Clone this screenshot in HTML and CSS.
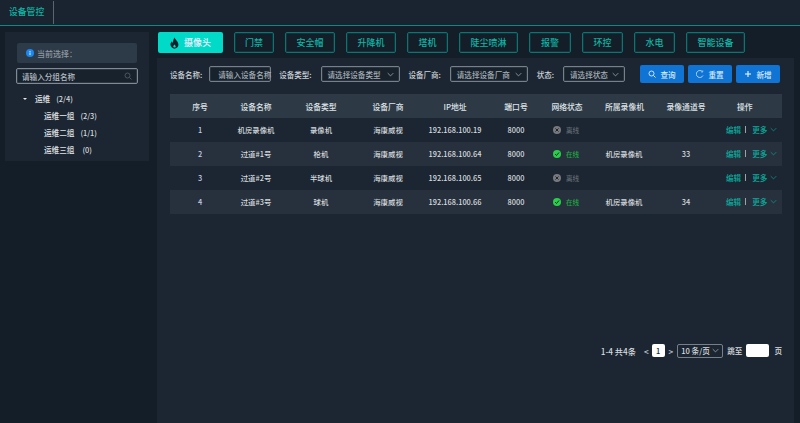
FILE: index.html
```html
<!DOCTYPE html>
<html lang="zh">
<head>
<meta charset="utf-8">
<title>设备管控</title>
<link rel="stylesheet" href="styles.css">
</head>
<body>
<header class="topbar"><div class="brand">设备管控</div></header>
<div class="content">
  <aside class="sidebar">
    <div class="current"><svg class="info" viewBox="0 0 16 16"><circle cx="8" cy="8" r="8" fill="#1d86f0"/><rect x="7" y="7" width="2" height="5" fill="#dff"/><rect x="7" y="4" width="2" height="2" fill="#dff"/></svg><span>当前选择：</span></div>
    <div class="search"><span>请输入分组名称</span><svg class="search-ic" viewBox="0 0 16 16" fill="none" stroke="#56616c" stroke-width="1.6"><circle cx="7" cy="7" r="5"/><path d="M11 11l4 4"/></svg></div>
    <ul class="tree">
      <li class="tree-root"><i class="caret"></i><b>运维</b><span>(2/4)</span></li>
      <li><b>运维一组</b><span>(2/3)</span></li>
      <li><b>运维二组</b><span>(1/1)</span></li>
      <li><b>运维三组</b><span class="zero">(0)</span></li>
    </ul>
  </aside>
  <main class="main">
    <nav class="tabs">
      <a class="tab active"><svg class="flame" viewBox="0 0 16 20"><path fill-rule="evenodd" d="M8.5 0c.5 3 2.500 4.500 4.500 7.500 1.500 2.300 2.300 4.500 1.800 7-.7 3.300-3.500 5.500-6.800 5.500-3.500 0-6.500-2.300-7-5.800C.2 11.500 1.500 9 3.500 7c0 1.500.5 2.600 1.600 3.200C4.800 6.500 6 3 8.500 0zM8 12.500c-1 1.200-2.200 2.200-2.200 3.700 0 1.200 1 2 2.200 2s2.200-.8 2.200-2c0-1.500-1.200-2.500-2.200-3.700z" fill="#142029"/></svg>摄像头</a>
      <a class="tab w39">门禁</a>
      <a class="tab w50">安全帽</a>
      <a class="tab w50">升降机</a>
      <a class="tab w40">塔机</a>
      <a class="tab w60">陡尘喷淋</a>
      <a class="tab w42">报警</a>
      <a class="tab w40">环控</a>
      <a class="tab w40">水电</a>
      <a class="tab w60">智能设备</a>
    </nav>
    <section class="panel">
      <div class="filters">
        <label class="lbl">设备名称:</label>
        <div class="field f-name">请输入设备名称</div>
        <label class="lbl l2">设备类型:</label>
        <div class="field f-type">请选择设备类型<svg class="chev" viewBox="0 0 10 6"><path d="M1 1l4 4 4-4"/></svg></div>
        <label class="lbl l3">设备厂商:</label>
        <div class="field f-vendor">请选择设备厂商<svg class="chev" viewBox="0 0 10 6"><path d="M1 1l4 4 4-4"/></svg></div>
        <label class="lbl l4">状态:</label>
        <div class="field f-state">请选择状态<svg class="chev" viewBox="0 0 10 6"><path d="M1 1l4 4 4-4"/></svg></div>
        <button class="btn first"><svg viewBox="0 0 16 16" fill="none" stroke="#dbeeff" stroke-width="1.8"><circle cx="7" cy="7" r="5"/><path d="M11 11l4 4"/></svg>查询</button>
        <button class="btn"><svg viewBox="0 0 16 16" fill="none" stroke="#dbeeff" stroke-width="1.5"><path d="M13 3.500A7 7 0 1 0 14 11"/><path d="M13.500 .5v3.500h-3.500" stroke-width="1"/></svg>重置</button>
        <button class="btn"><svg viewBox="0 0 16 16" fill="none" stroke="#fff" stroke-width="2"><path d="M8 2v12M2 8h12"/></svg>新增</button>
      </div>
      <table class="grid">
        <colgroup><col class="c1"><col class="c2"><col class="c3"><col class="c4"><col class="c5"><col class="c6"><col class="c7"><col class="c8"><col class="c9"><col class="c10"></colgroup>
        <thead><tr><th>序号</th><th>设备名称</th><th>设备类型</th><th>设备厂商</th><th>IP地址</th><th>端口号</th><th class="nh">网络状态</th><th>所属录像机</th><th class="ch">录像通道号</th><th class="oph">操作</th></tr></thead>
        <tbody>
          <tr><td class="num">1</td><td>机房录像机</td><td>录像机</td><td>海康威视</td><td>192.168.100.19</td><td>8000</td><td><span class="st off"><svg viewBox="0 0 16 16"><circle cx="8" cy="8" r="8" fill="#77797c"/><path d="M5 5l6 6M11 5l-6 6" stroke="#20262c" stroke-width="2"/></svg>离线</span></td><td></td><td class="ch"></td><td><div class="ops"><a>编辑</a><i></i><a>更多</a><svg class="chev t" viewBox="0 0 10 6"><path d="M1 1l4 4 4-4"/></svg></div></td></tr>
          <tr><td class="num">2</td><td>过道#1号</td><td>枪机</td><td>海康威视</td><td>192.168.100.64</td><td>8000</td><td><span class="st on"><svg viewBox="0 0 16 16"><circle cx="8" cy="8" r="8" fill="#29cf4a"/><path d="M4 8l3 3 5-6" stroke="#10281a" stroke-width="2" fill="none"/></svg>在线</span></td><td>机房录像机</td><td class="ch">33</td><td><div class="ops"><a>编辑</a><i></i><a>更多</a><svg class="chev t" viewBox="0 0 10 6"><path d="M1 1l4 4 4-4"/></svg></div></td></tr>
          <tr><td class="num">3</td><td>过道#2号</td><td>半球机</td><td>海康威视</td><td>192.168.100.65</td><td>8000</td><td><span class="st off"><svg viewBox="0 0 16 16"><circle cx="8" cy="8" r="8" fill="#77797c"/><path d="M5 5l6 6M11 5l-6 6" stroke="#20262c" stroke-width="2"/></svg>离线</span></td><td></td><td class="ch"></td><td><div class="ops"><a>编辑</a><i></i><a>更多</a><svg class="chev t" viewBox="0 0 10 6"><path d="M1 1l4 4 4-4"/></svg></div></td></tr>
          <tr><td class="num">4</td><td>过道#3号</td><td>球机</td><td>海康威视</td><td>192.168.100.66</td><td>8000</td><td><span class="st on"><svg viewBox="0 0 16 16"><circle cx="8" cy="8" r="8" fill="#29cf4a"/><path d="M4 8l3 3 5-6" stroke="#10281a" stroke-width="2" fill="none"/></svg>在线</span></td><td>机房录像机</td><td class="ch">34</td><td><div class="ops"><a>编辑</a><i></i><a>更多</a><svg class="chev t" viewBox="0 0 10 6"><path d="M1 1l4 4 4-4"/></svg></div></td></tr>
        </tbody>
      </table>
      <div class="pager">
        <span>1-4 共4条</span>
        <span class="arrow prev">&lt;</span>
        <span class="page">1</span>
        <span class="arrow next">&gt;</span>
        <span class="size">10 条/页<svg class="chev" viewBox="0 0 10 6"><path d="M1 1l4 4 4-4"/></svg></span>
        <span class="small">跳至</span>
        <span class="jump"></span>
        <span class="small">页</span>
      </div>
    </section>
  </main>
</div>
</body>
</html>
```

FILE: styles.css
```css
* { box-sizing: border-box; }
html, body { margin: 0; height: 100%; }
body {
  width: 800px; height: 423px; overflow: hidden;
  background: #141e29; color: #d6dade;
  font-family: "Noto Sans CJK SC", "Noto Sans", sans-serif;
  font-size: 7.4px;
  font-weight: 500;
}
.topbar { height: 26px; background: #1a2430; border-bottom: 1px solid #0f8a82; display: flex; }
.brand { width: 54px; height: 23px; margin-top: 1px; padding-left: 9px; line-height: 22px; font-size: 8.8px; color: #0fb5a5; border-right: 1px solid #5a6570; }
.content { display: flex; align-items: flex-start; padding: 6px 6px 0 5px; }
.sidebar { width: 144px; height: 129px; background: #1b2632; flex: none; padding: 11px 11px 0; margin-right: 8px; }
.current { height: 20px; margin: 0 1px; padding-left: 9px; display: flex; align-items: center; gap: 3px; background: #2d3a47; border-radius: 2px; color: #8f98a1; font-size: 8px; }
.info { width: 8px; height: 8px; }
.search { height: 16px; margin-top: 5px; width: 122px; border: 1px solid #7f8a94; border-radius: 2px; padding: 0 5px; display: flex; align-items: center; justify-content: space-between; font-size: 7.6px; color: #b4bbc1; background: #18222d; box-shadow: inset 0 0 0 1px #2b3742; }
.search-ic { width: 8px; height: 8px; }
.tree { list-style: none; margin: 6px 0 0; padding: 0 0 0 28px; }
.tree li { height: 17px; display: flex; align-items: center; gap: 6px; }
.tree b { font-weight: 500; color: #e0e3e6; font-size: 7.6px; }
.tree-root { margin-left: -9px; position: relative; }
.caret { position: absolute; left: -12px; top: 8px; width: 0; height: 0; border-left: 2px solid transparent; border-right: 2px solid transparent; border-top: 2px solid #e8e8e8; }
.zero { margin-left: 2px; }
.main { flex: 1; min-width: 0; }
.tabs { display: flex; height: 21px; padding-left: 1px; gap: 11px; }
.tab { height: 21px; display: flex; align-items: center; justify-content: center; border: 1px solid #0d7571; border-radius: 2px; color: #0fb5a4; font-size: 9px; background: #141e29; box-shadow: inset 0 0 0 1px #11333b; }
.tab.active { width: 65px; background: #00dac6; border: 0; color: #eef; gap: 5px; box-shadow: none; }
.flame { width: 9px; height: 12px; }
.w39 { width: 40px; }
.w40 { width: 41px; }
.w42 { width: 42px; }
.w50 { width: 50px; }
.w60 { width: 59px; }
.panel { margin-top: 5px; width: 637px; height: 365px; background: #1b2632; padding: 7px 12px 0 13px; }
.filters { display: flex; align-items: center; height: 18px; margin-bottom: 11px; }
.lbl { color: #ccd1d6; font-size: 7.5px; white-space: nowrap; flex: none; }
.l2 { margin-left: 8px; }
.l3 { margin-left: 9px; }
.l4 { margin-left: 9px; }
.field { height: 16px; margin-left: 8px; border: 1px solid #75808b; border-radius: 2px; background: #18222d; display: flex; align-items: center; justify-content: space-between; padding: 0 5px 0 8px; color: #a4adb4; font-size: 7.6px; white-space: nowrap; flex: none; box-shadow: inset 0 0 0 1px #28333e; }
.f-name { width: 62px; margin-left: 7px; }
.f-type { width: 79px; margin-left: 9px; padding-left: 6px; }
.f-vendor { width: 78px; margin-left: 9px; padding-left: 6px; }
.f-state { width: 62px; margin-left: 9px; padding-left: 6px; }
.chev { width: 7px; height: 5px; fill: none; stroke: #b4bcc4; stroke-width: 1; flex: none; }
.chev.t { stroke: #0b9f92; }
.btn { height: 18px; width: 44px; margin-left: 4px; border: 0; border-radius: 2px; background: #0f74d4; color: #d9ecff; display: flex; align-items: center; justify-content: center; gap: 4px; font: inherit; font-size: 7.6px; padding: 0; }
.btn.first { margin-left: 15px; }
.btn svg { width: 8px; height: 8px; }
.grid { width: 612px; table-layout: fixed; border-collapse: collapse; }
.c1 { width: 60px; } .c2 { width: 52px; } .c3 { width: 78px; } .c4 { width: 56px; } .c5 { width: 78px; }
.c6 { width: 44px; } .c7 { width: 67px; } .c8 { width: 38px; } .c9 { width: 83px; } .c10 { width: 56px; }
.grid th { height: 24px; background: #2d3945; font-weight: 500; color: #dfe3e7; font-size: 7.8px; text-align: center; padding: 0; white-space: nowrap; }
.grid td { height: 24px; text-align: center; padding: 0 0 2px; white-space: nowrap; color: #d6dade; }
.grid tbody tr:nth-child(even) td { background: #27313d; }
.grid .num { color: #c6cce6; }
.oph { text-align: left !important; padding-left: 11px !important; }
.ch { padding-left: 3px !important; }
.grid .nh { padding-right: 9px; }
.st { display: flex; align-items: center; gap: 5px; padding-left: 15px; margin-top: 2px; }
.st svg { width: 8px; height: 8px; }
.st.off { color: #646b72; font-size: 6.6px; }
.st.on { color: #1fa840; font-size: 6.6px; }
.ops { display: flex; align-items: center; font-size: 7.6px; }
.ops a { color: #0bab9c; }
.ops i { width: 1px; height: 7px; background: #9aa3ac; margin: 0 6px 0 4px; }
.ops .chev { margin-left: 3px; }
.pager { display: flex; align-items: center; justify-content: flex-end; height: 15px; margin-top: 129px; color: #d6dade; font-size: 8.2px; }
.small { font-size: 7.6px; }
.arrow { color: #c6ccd2; }
.prev { margin-left: 8px; }
.page { width: 13px; height: 13px; margin: 0 4px 0 3px; background: #fff; color: #1b2632; border-radius: 2px; text-align: center; line-height: 13px; font-size: 7.4px; }
.size { width: 46px; height: 14px; margin: 0 4px 0 4px; border: 1px solid #75808b; border-radius: 2px; display: flex; align-items: center; justify-content: space-between; padding: 0 3px 0 3px; white-space: nowrap; font-size: 7.6px; }
.jump { width: 23px; height: 13px; margin: 0 5px 0 4px; background: #fff; border-radius: 2px; }
```
